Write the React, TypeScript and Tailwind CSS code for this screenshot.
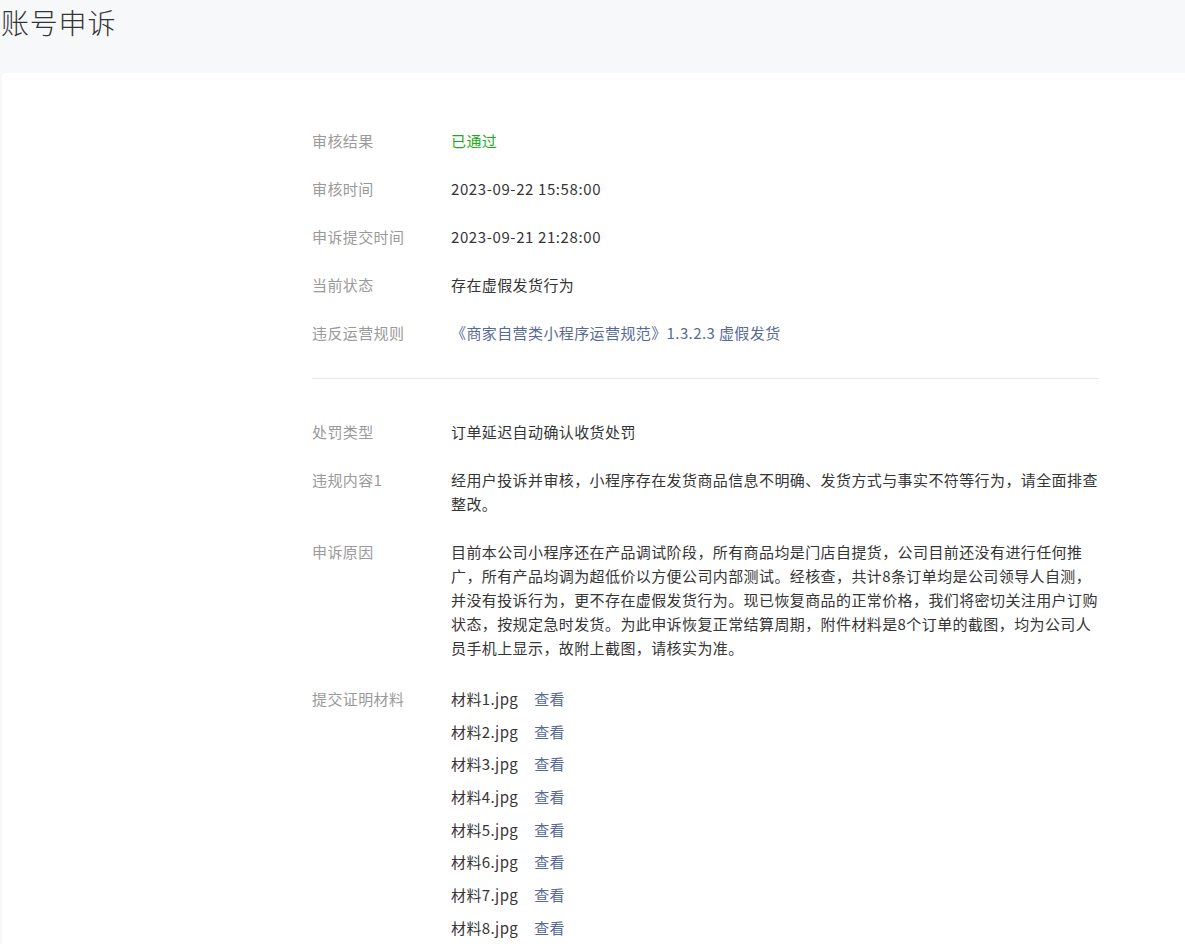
import React from "react";

const Row = ({ label, children, className = "" }: { label: string; children: React.ReactNode; className?: string }) => (
  <div className={"flex " + className}>
    <div className="w-[139px] shrink-0 text-[#9a9a9a]">{label}</div>
    <div className="flex-1 min-w-0 text-[#353535]">{children}</div>
  </div>
);

export default function App() {
  const files = [1, 2, 3, 4, 5, 6, 7, 8];
  return (
    <div className="min-h-screen w-full overflow-hidden bg-[#f7f8fa] font-['Noto_Sans_CJK_SC','Noto_Sans',sans-serif]">
      <h1 className="h-[73px] pl-[1px] text-[28px] leading-[44px] font-light tracking-[0.8px] text-[#353535]">账号申诉</h1>
      <div className="ml-[2px] rounded-tl-[4px] bg-white pt-[56px] pb-[40px]">
        <div className="ml-[310px] w-[787px] text-[15px] leading-[24px] tracking-[0.4px]">
          <div className="flex flex-col gap-[24px]">
            <Row label="审核结果">
              <span className="text-[#1aad19]">已通过</span>
            </Row>
            <Row label="审核时间">
              <span className="tracking-[0.6px]">2023-09-22 15:58:00</span>
            </Row>
            <Row label="申诉提交时间">
              <span className="tracking-[0.6px]">2023-09-21 21:28:00</span>
            </Row>
            <Row label="当前状态">存在虚假发货行为</Row>
            <Row label="违反运营规则">
              <span className="text-[#576b95]">《商家自营类小程序运营规范》1.3.2.3 虚假发货</span>
            </Row>
          </div>
          <div className="mt-[33px] mb-[41px] h-px bg-[#e7e7e7]" />
          <div className="flex flex-col gap-[24px]">
            <Row label="处罚类型">订单延迟自动确认收货处罚</Row>
            <Row label="违规内容1">
              经用户投诉并审核，小程序存在发货商品信息不明确、发货方式与事实不符等行为，请全面排查整改。
            </Row>
            <Row label="申诉原因">
              目前本公司小程序还在产品调试阶段，所有商品均是门店自提货，公司目前还没有进行任何推广，所有产品均调为超低价以方便公司内部测试。经核查，共计8条订单均是公司领导人自测，并没有投诉行为，更不存在虚假发货行为。现已恢复商品的正常价格，我们将密切关注用户订购状态，按规定急时发货。为此申诉恢复正常结算周期，附件材料是8个订单的截图，均为公司人员手机上显示，故附上截图，请核实为准。
            </Row>
            <Row label="提交证明材料" className="mt-[3px]">
              <div className="flex flex-col gap-[8.7px]">
                {files.map((n) => (
                  <div key={n} className="flex gap-[16px]">
                    <span>材料{n}.jpg</span>
                    <span className="text-[#576b95] cursor-pointer">查看</span>
                  </div>
                ))}
              </div>
            </Row>
          </div>
        </div>
      </div>
    </div>
  );
}
